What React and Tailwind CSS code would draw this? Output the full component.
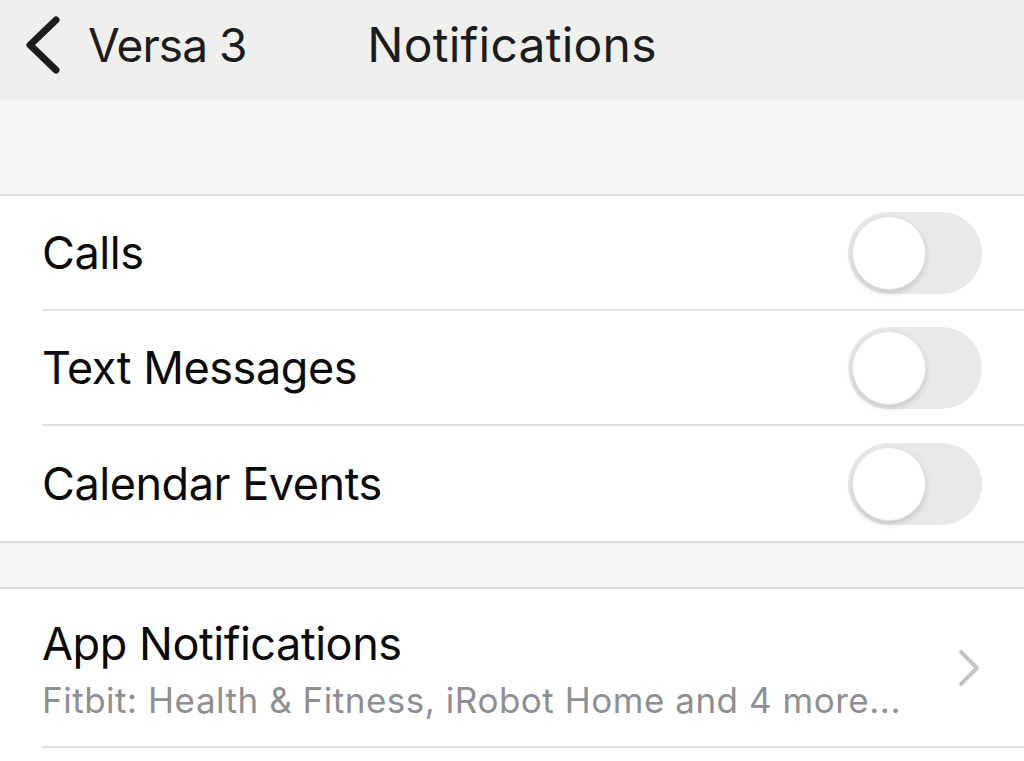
const ToggleRow = ({ label, last }) => (
  <div className="flex h-[115px] items-center pl-[42px]">
    <div
      className={`flex h-full flex-1 items-center justify-between pr-[42px] ${last ? '' : 'border-b-2 border-[#e0e0e2]'}`}
    >
      <span className="text-[45px] leading-none tracking-[-0.01em] text-[#0a0a0a]">{label}</span>
      <div className="flex h-[82px] w-[134px] items-center rounded-full bg-[#e9e9eb] p-[4px]">
        <div className="h-[74px] w-[74px] rounded-full border border-[#e4e4e4] bg-white shadow-[0_3px_6px_rgba(0,0,0,0.15)]" />
      </div>
    </div>
  </div>
);

export default function App() {
  return (
    <div className="h-[761px] w-[1024px] overflow-hidden bg-white font-['Inter','Liberation_Sans',sans-serif]">
      <header className="grid h-[100px] grid-cols-[1fr_auto_1fr] items-center bg-[#efefed] pb-[10px]">
        <div className="flex items-center gap-[26px] pl-[24px]">
          <svg width="38" height="58" viewBox="0 0 38 58" fill="none">
            <path d="M32 4 L6 29 L32 54" stroke="#1c1c1e" strokeWidth="7" strokeLinecap="round" strokeLinejoin="round" />
          </svg>
          <span className="text-[46px] leading-none tracking-[-0.02em] text-[#1c1c1e]">Versa 3</span>
        </div>
        <h1 className="text-[48px] leading-none tracking-[0.005em] text-[#1c1c1e]">Notifications</h1>
        <div />
      </header>

      <div className="h-[96px] border-b-2 border-[#dcdcde] bg-[#f5f5f5]" />

      <section className="bg-white">
        <ToggleRow label="Calls" />
        <ToggleRow label="Text Messages" />
        <ToggleRow label="Calendar Events" last />
      </section>

      <div className="h-[48px] border-y-2 border-[#dcdcde] bg-[#f5f5f5]" />

      <section className="bg-white pl-[42px]">
        <div className="flex h-[159px] items-center justify-between border-b-2 border-[#e0e0e2] pr-[44px]">
          <div className="flex flex-col gap-[17px] pt-[4px]">
            <span className="text-[45px] leading-none tracking-[-0.01em] text-[#0a0a0a]">App Notifications</span>
            <span className="text-[35px] leading-none tracking-[0.015em] text-[#8e8e93]">
              Fitbit: Health &amp; Fitness, iRobot Home and 4 more...
            </span>
          </div>
          <svg width="22" height="38" viewBox="0 0 22 38" fill="none">
            <path d="M3 3 L19 19 L3 35" stroke="#c4c4c7" strokeWidth="4" strokeLinecap="round" strokeLinejoin="round" />
          </svg>
        </div>
      </section>
    </div>
  );
}
